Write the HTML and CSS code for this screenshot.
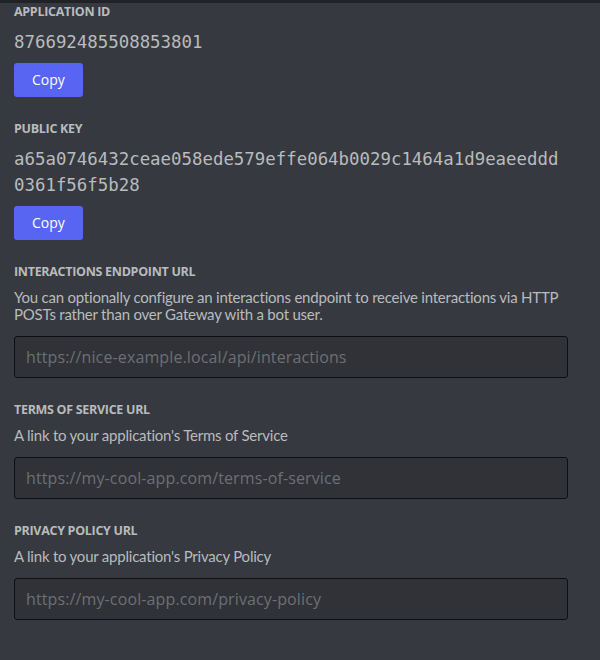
FILE: index.html
```html
<!DOCTYPE html>
<html>
<head>
<meta charset="utf-8">
<link rel="stylesheet" href="styles.css">
</head>
<body>
<div class="topbar"></div>
<main class="content">
  <section class="section first">
    <h2 class="label">Application ID</h2>
    <div class="mono">876692485508853801</div>
    <button class="btn">Copy</button>
  </section>
  <section class="section">
    <h2 class="label">Public Key</h2>
    <div class="mono">a65a0746432ceae058ede579effe064b0029c1464a1d9eaeeddd0361f56f5b28</div>
    <button class="btn">Copy</button>
  </section>
  <section class="section">
    <h2 class="label">Interactions Endpoint URL</h2>
    <p class="desc">You can optionally configure an interactions endpoint to receive interactions via HTTP POSTs rather than over Gateway with a bot user.</p>
    <input class="field" type="text" placeholder="https://nice-example.local/api/interactions">
  </section>
  <section class="section">
    <h2 class="label">Terms of Service URL</h2>
    <p class="desc">A link to your application's Terms of Service</p>
    <input class="field" type="text" placeholder="https://my-cool-app.com/terms-of-service">
  </section>
  <section class="section">
    <h2 class="label">Privacy Policy URL</h2>
    <p class="desc">A link to your application's Privacy Policy</p>
    <input class="field" type="text" placeholder="https://my-cool-app.com/privacy-policy">
  </section>
</main>
</body>
</html>
```
FILE: styles.css
```css
html, body {
  margin: 0;
  padding: 0;
  background: #36393f;
  height: 100%;
}
body {
  font-family: "Open Sans", "Noto Sans", sans-serif;
  color: #b9bbbe;
  overflow: hidden;
}
.topbar {
  height: 3px;
  background: #202225;
}
.content {
  width: 554px;
  padding-left: 14px;
  display: flex;
  flex-direction: column;
}
.section {
  display: flex;
  flex-direction: column;
  align-items: flex-start;
  margin-top: 24px;
}
.section.first {
  margin-top: 1px;
}
.label {
  margin: 0;
  font-size: 12.5px;
  line-height: 16px;
  font-weight: 700;
  text-transform: uppercase;
  color: #b9bbbe;
  letter-spacing: -0.3px;
  font-stretch: 90%;
}
.mono {
  margin-top: 9px;
  font-family: "DejaVu Sans Mono", "Liberation Mono", monospace;
  font-size: 17.4px;
  line-height: 26.5px;
  color: #b9bbbe;
  word-break: break-all;
  width: 550px;
}
.btn {
  margin-top: 7px;
  height: 34px;
  padding: 0 18px;
  border: 0;
  border-radius: 3px;
  background: #5865f2;
  color: #fff;
  font-family: "Open Sans", "Noto Sans", sans-serif;
  font-size: 14px;
  font-weight: 500;
}
.desc {
  margin: 9px 0 0;
  font-family: Lato, "Open Sans", sans-serif;
  font-size: 15px;
  line-height: 17px;
  letter-spacing: -0.22px;
  color: #b9bbbe;
}
.field {
  box-sizing: border-box;
  margin-top: 13px;
  width: 554px;
  height: 42px;
  padding: 0 11px;
  background: #303237;
  border: 1px solid #0e0f11;
  border-radius: 3px;
  color: #dcddde;
  font-family: "Open Sans", "Noto Sans", sans-serif;
  font-size: 16px;
  letter-spacing: 0.12px;
  outline: none;
}
.field::placeholder {
  color: #6c6f75;
}
```
